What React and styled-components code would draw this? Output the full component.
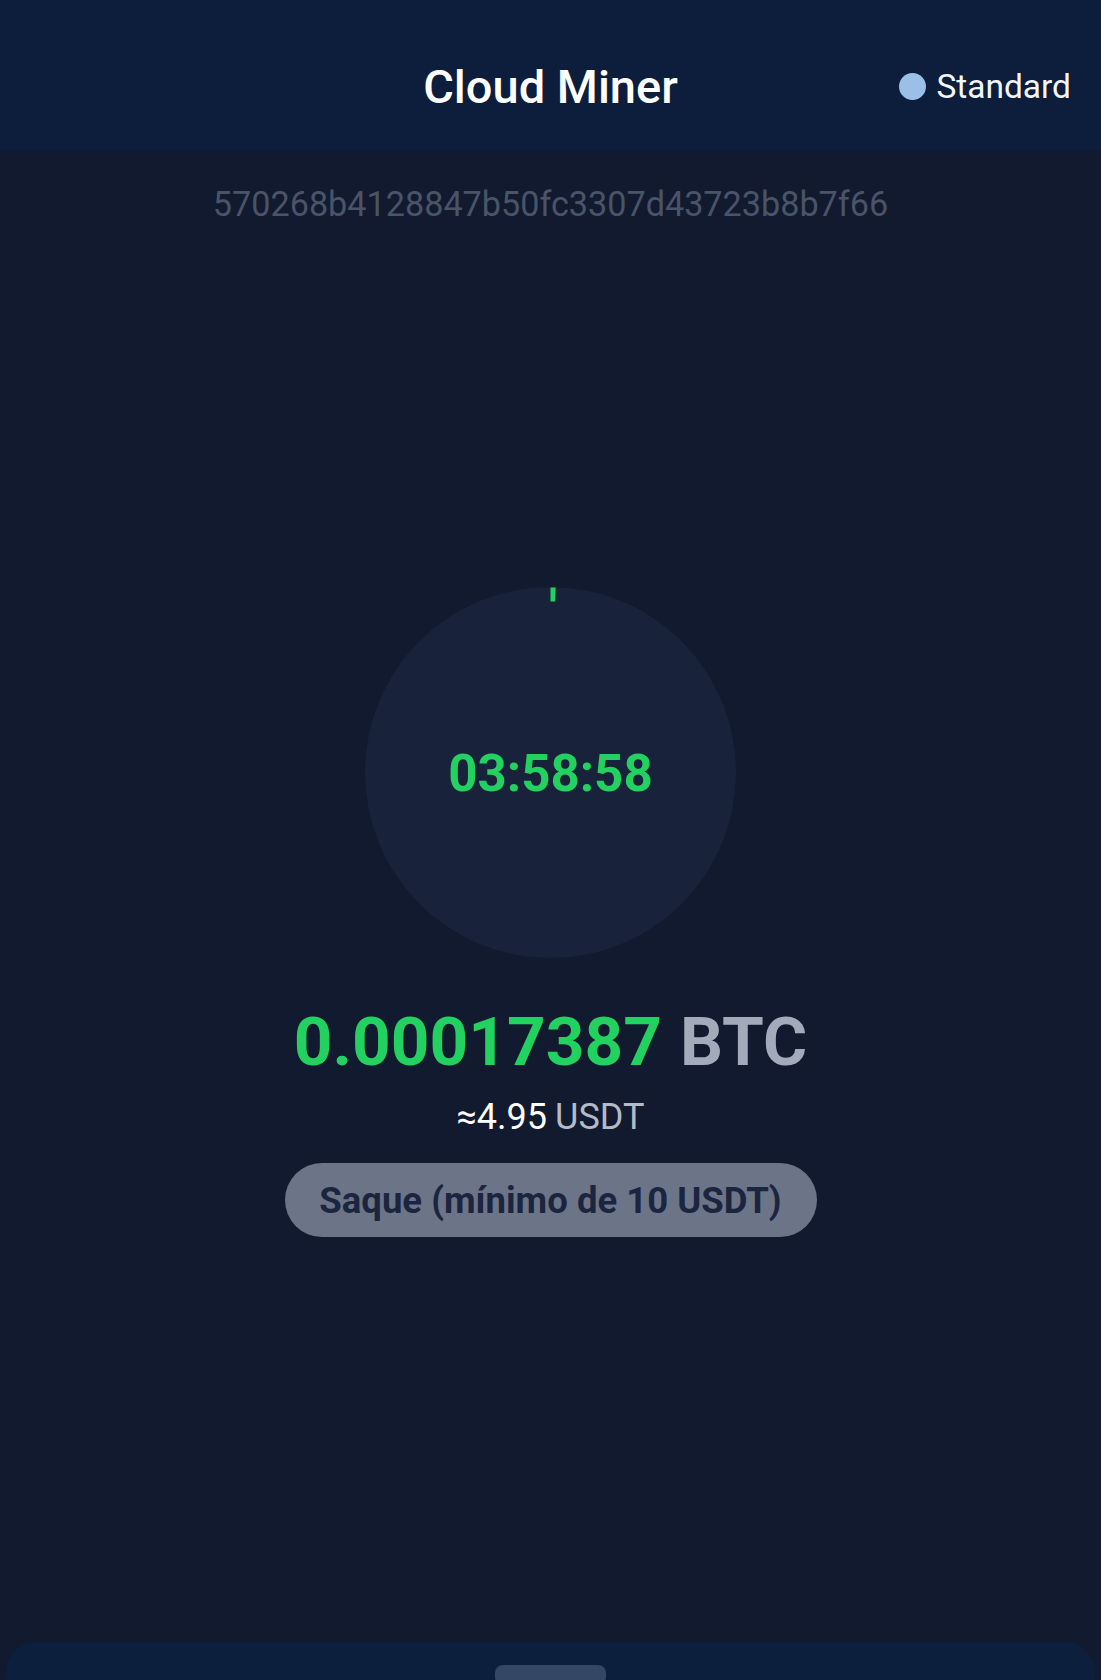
import React from "react";
import styled, { createGlobalStyle } from "styled-components";

const Global = createGlobalStyle`
  html, body { margin: 0; padding: 0; background: #111a2f; }
  body { font-family: Roboto, "Noto Sans", "Liberation Sans", sans-serif; }
  * { box-sizing: border-box; }
`;

const Screen = styled.div`
  width: 1101px;
  height: 1680px;
  overflow: hidden;
  background: #111a2f;
  display: flex;
  flex-direction: column;
  align-items: stretch;
`;

const Header = styled.header`
  height: 150px;
  flex: none;
  padding: 22px 30px 0 30px;
  background: #0c1e3b;
  display: grid;
  grid-template-columns: 1fr auto 1fr;
  align-items: center;
`;

const Title = styled.h1`
  grid-column: 2;
  margin: 0;
  font-size: 47px;
  font-weight: 500;
  color: #ffffff;
`;

const Badge = styled.div`
  grid-column: 3;
  justify-self: end;
  display: flex;
  align-items: center;
  gap: 10px;
  font-size: 33.5px;
  color: #f2f5fa;
`;

const Dot = styled.span`
  width: 27px;
  height: 27px;
  border-radius: 50%;
  background: #9bbfe6;
`;

const Main = styled.main`
  flex: 1;
  display: flex;
  flex-direction: column;
  align-items: center;
  padding-top: 32px;
`;

const Hash = styled.div`
  font-size: 34.2px;
  line-height: 44px;
  color: #4a5468;
`;

const Dial = styled.div`
  position: relative;
  margin-top: 361px;
  width: 371px;
  height: 371px;
  border-radius: 50%;
  background: #18223a;
  display: flex;
  align-items: center;
  justify-content: center;
`;

const Ring = styled.svg`
  position: absolute;
  inset: 0;
  transform: rotate(-90deg);
`;

const Timer = styled.div`
  font-size: 51px;
  font-weight: 700;
  color: #22d160;
  line-height: 1;
  padding-top: 2px;
`;

const Amount = styled.div`
  margin-top: 42px;
  font-size: 67.5px;
  line-height: 84px;
  font-weight: 700;
  color: #22d160;
  display: flex;
  gap: 18px;
`;

const Unit = styled.span`
  color: ${(p) => p.$color};
`;

const Fiat = styled.div`
  margin-top: 11px;
  font-size: 36px;
  line-height: 44px;
  color: #ffffff;
  display: flex;
  gap: 8px;
`;

const WithdrawButton = styled.button`
  margin-top: 24px;
  width: 532px;
  height: 74px;
  border: none;
  border-radius: 37px;
  background: #6c7487;
  color: #1b2540;
  font-family: Roboto, "Noto Sans", sans-serif;
  font-size: 36.5px;
  font-weight: 700;
  cursor: not-allowed;
`;

const Sheet = styled.div`
  flex: none;
  height: 38px;
  margin: 0 6px;
  border-radius: 30px 30px 0 0;
  background: #0c1f3c;
  display: flex;
  justify-content: center;
  padding-top: 23px;
`;

const Handle = styled.div`
  width: 111px;
  height: 20px;
  border-radius: 8px;
  background: #344866;
`;

export default function App() {
  const r = 178;
  return (
    <>
      <Global />
      <Screen>
        <Header>
          <Title>Cloud Miner</Title>
          <Badge>
            <Dot />
            Standard
          </Badge>
        </Header>
        <Main>
          <Hash>570268b4128847b50fc3307d43723b8b7f66</Hash>
          <Dial>
            <Ring width="371" height="371" viewBox="0 0 371 371">
              <circle
                cx="185.5"
                cy="185.5"
                r={r}
                fill="none"
                stroke="#22d160"
                strokeWidth="14"
                strokeDasharray={`5 ${2 * Math.PI * r}`}
              />
            </Ring>
            <Timer>03:58:58</Timer>
          </Dial>
          <Amount>
            <span>0.00017387</span>
            <Unit $color="#a3abba">BTC</Unit>
          </Amount>
          <Fiat>
            <span>≈4.95</span>
            <Unit $color="#b4bac6">USDT</Unit>
          </Fiat>
          <WithdrawButton disabled>Saque (mínimo de 10 USDT)</WithdrawButton>
        </Main>
        <Sheet>
          <Handle />
        </Sheet>
      </Screen>
    </>
  );
}
